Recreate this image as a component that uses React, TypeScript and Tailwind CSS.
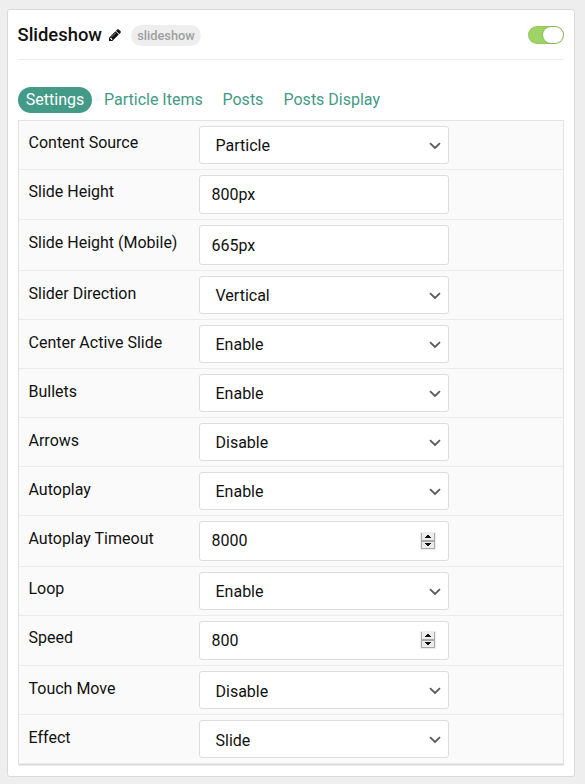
type Kind = 'select' | 'text' | 'number';

type Field = {
  label: string;
  value: string;
  kind: Kind;
  height: string;
  labelPad: string;
  valuePad: string;
};

const SHORT = 'h-[38px]';
const MID = 'h-[39px]';
const TALL = 'h-[40px]';

const fields: Field[] = [
  { label: 'Content Source', value: 'Particle', kind: 'select', height: SHORT, labelPad: 'pt-[5px]', valuePad: 'pt-[2px]' },
  { label: 'Slide Height', value: '800px', kind: 'text', height: MID, labelPad: 'pt-[5px]', valuePad: 'pt-0' },
  { label: 'Slide Height (Mobile)', value: '665px', kind: 'text', height: TALL, labelPad: 'pt-[6px]', valuePad: 'pt-[2px]' },
  { label: 'Slider Direction', value: 'Vertical', kind: 'select', height: SHORT, labelPad: 'pt-[6px]', valuePad: 'pt-[2px]' },
  { label: 'Center Active Slide', value: 'Enable', kind: 'select', height: SHORT, labelPad: 'pt-[6px]', valuePad: 'pt-[2px]' },
  { label: 'Bullets', value: 'Enable', kind: 'select', height: SHORT, labelPad: 'pt-[6px]', valuePad: 'pt-[2px]' },
  { label: 'Arrows', value: 'Disable', kind: 'select', height: SHORT, labelPad: 'pt-[6px]', valuePad: 'pt-[2px]' },
  { label: 'Autoplay', value: 'Enable', kind: 'select', height: SHORT, labelPad: 'pt-[6px]', valuePad: 'pt-[2px]' },
  { label: 'Autoplay Timeout', value: '8000', kind: 'number', height: TALL, labelPad: 'pt-[6px]', valuePad: 'pt-0' },
  { label: 'Loop', value: 'Enable', kind: 'select', height: SHORT, labelPad: 'pt-[5px]', valuePad: 'pt-[2px]' },
  { label: 'Speed', value: '800', kind: 'number', height: MID, labelPad: 'pt-[5px]', valuePad: 'pt-0' },
  { label: 'Touch Move', value: 'Disable', kind: 'select', height: SHORT, labelPad: 'pt-[6px]', valuePad: 'pt-[4px]' },
  { label: 'Effect', value: 'Slide', kind: 'select', height: SHORT, labelPad: 'pt-[6px]', valuePad: 'pt-[4px]' },
];

function Pencil() {
  return (
    <svg viewBox="0 0 1536 1536" className="ml-[7px] mt-[1px] h-[12px] w-[12px]" fill="#111">
      <path d="M363 1408l91-91-235-235-91 91v107h128v128h107zM886 480q0-22-22-22-10 0-17 7l-542 542q-7 7-7 17 0 22 22 22 10 0 17-7l542-542q7-7 7-17zM832 288l416 416-832 832H0v-416zM1515 384q0 53-37 90l-166 166-416-416 166-165q36-38 90-38 53 0 91 38l235 234q37 39 37 91z" />
    </svg>
  );
}

function Chevron() {
  return (
    <svg viewBox="0 0 12 8" className="mr-[7px] mt-[1px] h-[8px] w-[12px]" fill="none" stroke="#5a5a5a" strokeWidth="1.8">
      <path d="M1 1.2 6 6 11 1.2" />
    </svg>
  );
}

function Spinner({ tall }: { tall: boolean }) {
  return (
    <svg
      viewBox="0 0 16 18"
      className={`mr-[12px] h-[18px] w-[16px] self-start ${tall ? 'mt-[10px]' : 'mt-[9px]'}`}
      shapeRendering="crispEdges"
    >
      <rect width="16" height="18" fill="#ededed" />
      <path d="M1 1h1v7h12V1h1v16H1z" fill="#a9a9a9" />
      <rect x="2" y="1" width="12" height="7" fill="#ececec" />
      <rect x="2" y="10" width="12" height="6" fill="#ececec" />
      <path d="M7 3h2v1h1v1h1v1H5V5h1V4h1z" fill="#111" />
      <path d="M5 11h6v1H5zM6 12h4v1H6zM7 13h2v1H7z" fill="#111" />
    </svg>
  );
}

function Row({ field }: { field: Field }) {
  const isSelect = field.kind === 'select';
  return (
    <div className="flex border-b border-[#ebebeb] py-[5px] pl-[9.5px]">
      <div className={`w-[170.5px] leading-[24px] ${field.labelPad}`}>{field.label}</div>
      <div
        className={`flex w-[250px] items-center justify-between rounded-[3px] border border-[#dddddd] bg-white ${field.height} ${isSelect ? 'pl-[15.5px]' : 'pl-[11.5px]'}`}
      >
        <span className={`leading-[24px] ${field.valuePad}`}>{field.value}</span>
        {isSelect && <Chevron />}
        {field.kind === 'number' && <Spinner tall={field.height === TALL} />}
      </div>
    </div>
  );
}

export default function App() {
  return (
    <div className="h-[784px] w-[585px] bg-[#eeeeee] pl-[7px] pt-[9px] font-[Roboto,sans-serif] text-[16px] text-[#111]">
      <div className="h-[768px] w-[568px] rounded-[3px] border border-[#dadada] bg-white px-[10px]">
        <header className="flex h-[50px] items-center justify-between border-b border-[#ededed]">
          <div className="flex items-center">
            <h1 className="-ml-[0.5px] w-[84.5px] whitespace-nowrap text-[18.4px] font-medium leading-[24px]">Slideshow</h1>
            <Pencil />
            <span className="ml-[10px] mt-[1px] flex h-[21px] w-[70px] items-center justify-center rounded-full bg-[#eeeeee] pt-[1px] text-[12.8px] font-medium text-[#a0a0a0]">
              slideshow
            </span>
          </div>
          <div className="flex h-[18px] w-[36px] items-center justify-end rounded-full bg-[#9fd366] pr-[1px] shadow-[inset_0_0_1px_1px_rgba(0,0,0,0.06)]">
            <div className="h-[16px] w-[20px] rounded-full bg-white shadow-[0_0_2px_rgba(0,0,0,0.3)]" />
          </div>
        </header>
        <nav className="mt-[27px] flex h-[26px] items-center leading-[26px] text-[#439a86]">
          <span className="w-[74px] rounded-full bg-[#439a86] text-center text-white">Settings</span>
          <span className="ml-[12px] w-[99px] whitespace-nowrap">Particle Items</span>
          <span className="ml-[19.5px] w-[41px]">Posts</span>
          <span className="ml-[20px]">Posts Display</span>
        </nav>
        <section className="mt-[7px] border border-[#e3e3e3] border-b-[#d8d8d8] bg-[#fafafa] shadow-[0_1px_0_#eeeeee]">
          {fields.map((field) => (
            <Row key={field.label} field={field} />
          ))}
        </section>
      </div>
    </div>
  );
}
